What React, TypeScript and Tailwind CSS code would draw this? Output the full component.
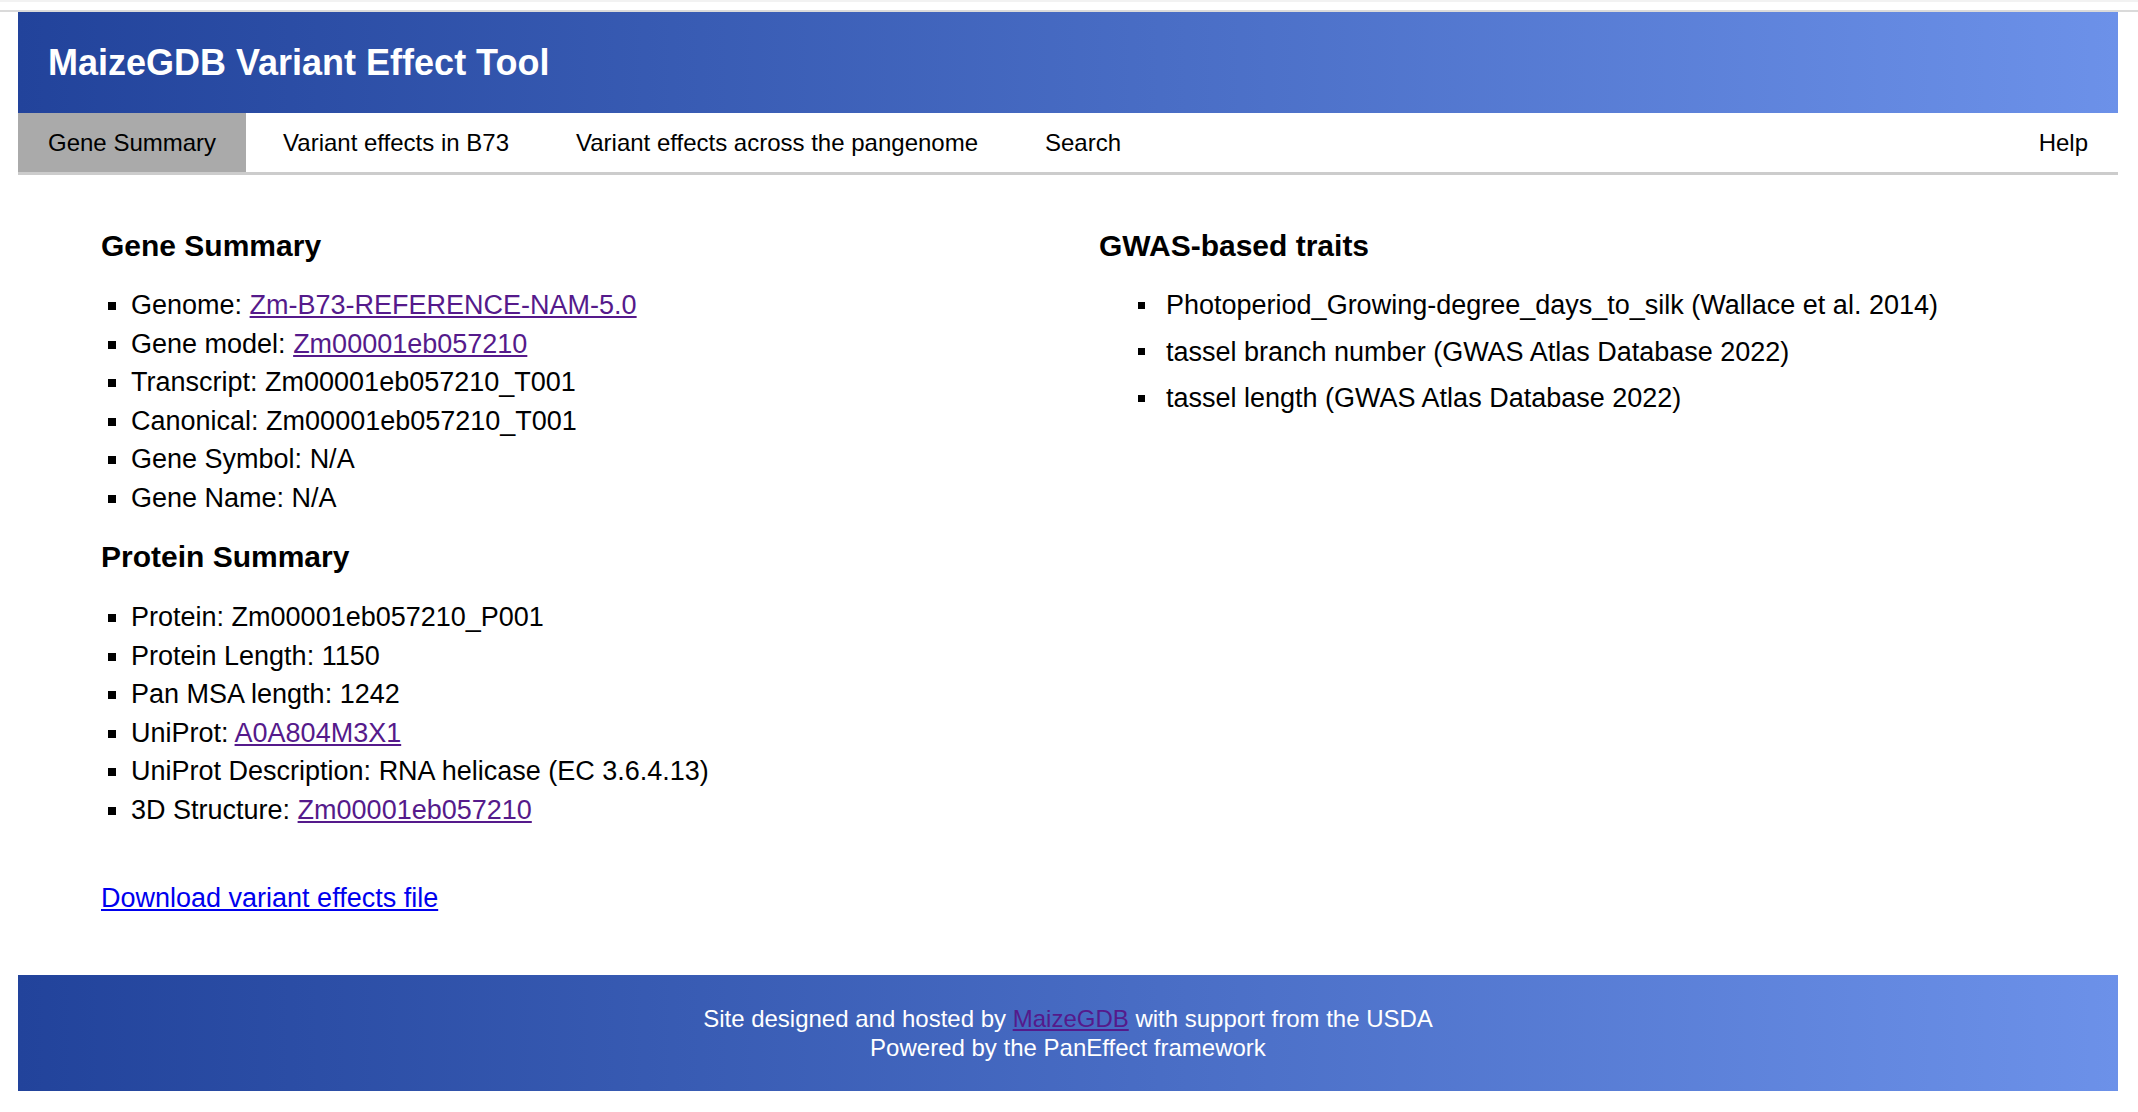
const geneItems = [
  { label: 'Genome', value: 'Zm-B73-REFERENCE-NAM-5.0', link: true },
  { label: 'Gene model', value: 'Zm00001eb057210', link: true },
  { label: 'Transcript', value: 'Zm00001eb057210_T001' },
  { label: 'Canonical', value: 'Zm00001eb057210_T001' },
  { label: 'Gene Symbol', value: 'N/A' },
  { label: 'Gene Name', value: 'N/A' },
];

const proteinItems = [
  { label: 'Protein', value: 'Zm00001eb057210_P001' },
  { label: 'Protein Length', value: '1150' },
  { label: 'Pan MSA length', value: '1242' },
  { label: 'UniProt', value: 'A0A804M3X1', link: true },
  { label: 'UniProt Description', value: 'RNA helicase (EC 3.6.4.13)' },
  { label: '3D Structure', value: 'Zm00001eb057210', link: true },
];

const traits = [
  'Photoperiod_Growing-degree_days_to_silk (Wallace et al. 2014)',
  'tassel branch number (GWAS Atlas Database 2022)',
  'tassel length (GWAS Atlas Database 2022)',
];

const tabs = ['Gene Summary', 'Variant effects in B73', 'Variant effects across the pangenome', 'Search'];

type Item = { label: string; value: string; link?: boolean };

function InfoList({ items }: { items: Item[] }) {
  return (
    <ul className="list-[square] pl-[30px] text-[27px] leading-[38.5px]">
      {items.map((it) => (
        <li key={it.label}>
          {it.label}:{' '}
          {it.link ? (
            <a href="#" className="text-[#551a8b] underline">
              {it.value}
            </a>
          ) : (
            it.value
          )}
        </li>
      ))}
    </ul>
  );
}

export default function App() {
  return (
    <div className="min-h-screen border-t-2 border-[#f2f2f2] bg-white pt-2 font-['Liberation_Sans',Arial,sans-serif] text-black">
      <div className="border-t-2 border-[#dadada]">
        <div className="ml-[18px] w-[2100px]">
          <header className="flex h-[101px] items-center bg-linear-to-r from-[#22439b] to-[#6c91e9] pl-[30px]">
            <h1 className="text-[36px] font-bold text-white">MaizeGDB Variant Effect Tool</h1>
          </header>

          <nav className="flex h-[62px] gap-[7px] border-b-[3px] border-[#cccccc] text-[24px]">
            {tabs.map((t, i) => (
              <a
                key={t}
                href="#"
                className={`flex items-center px-[30px] ${i === 0 ? 'bg-[#aaaaaa]' : ''}`}
              >
                {t}
              </a>
            ))}
            <a href="#" className="ml-auto flex items-center px-[30px]">
              Help
            </a>
          </nav>

          <main className="grid grid-cols-2 gap-x-[62px] px-[83px] pt-[53px]">
            <section>
              <h2 className="mb-[22px] text-[30px] leading-[36px] font-bold">Gene Summary</h2>
              <InfoList items={geneItems} />
              <h2 className="mt-[22px] mb-[23px] text-[30px] leading-[36px] font-bold">Protein Summary</h2>
              <InfoList items={proteinItems} />
              <p className="mt-[50px] text-[27px] leading-[38px]">
                <a href="#" className="text-[#0000ee] underline">
                  Download variant effects file
                </a>
              </p>
            </section>
            <section>
              <h2 className="mb-[22px] text-[30px] leading-[36px] font-bold">GWAS-based traits</h2>
              <ul className="flex flex-col gap-[8px] pl-[39px] text-[27px] leading-[38.5px]">
                {traits.map((t) => (
                  <li key={t} className="flex items-center">
                    <span className="mr-[21px] h-[7px] w-[7px] shrink-0 bg-black" />
                    {t}
                  </li>
                ))}
              </ul>
            </section>
          </main>

          <footer className="mt-[58px] flex h-[116px] flex-col items-center justify-center bg-linear-to-r from-[#22439b] to-[#6c91e9] text-[24px] leading-[29px] text-white">
            <p>
              Site designed and hosted by{' '}
              <a href="#" className="text-[#551a8b] underline">
                MaizeGDB
              </a>{' '}
              with support from the USDA
            </p>
            <p>Powered by the PanEffect framework</p>
          </footer>
        </div>
      </div>
    </div>
  );
}
